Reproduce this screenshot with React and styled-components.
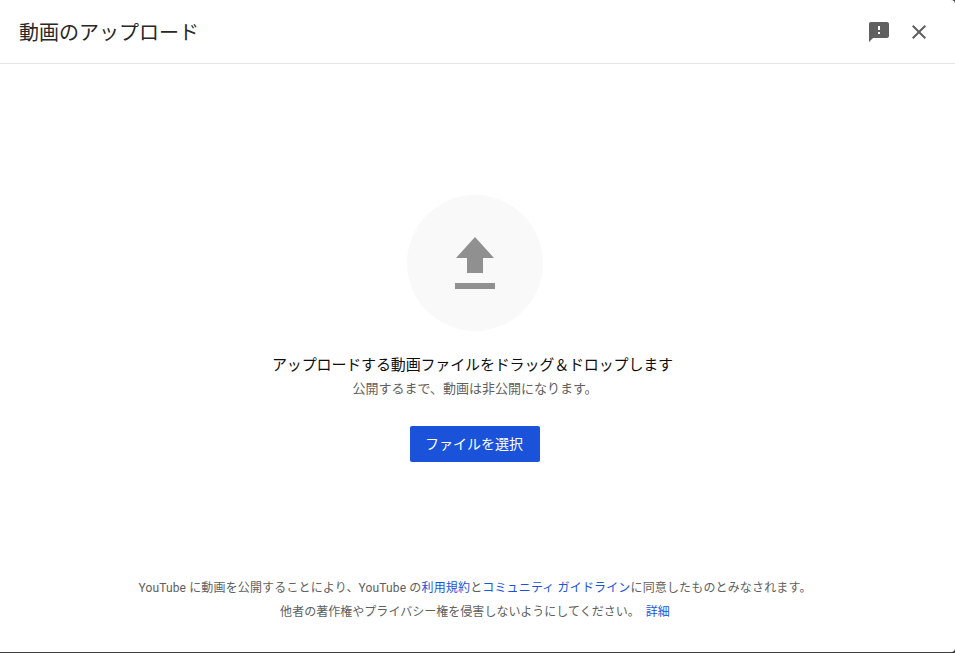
import React from 'react';
import styled, {createGlobalStyle} from 'styled-components';

const Global = createGlobalStyle`
    html, body {
        margin: 0;
        padding: 0;
        height: 100%;
        background: #3c3c3c;
    }
    body {
        font-family: Roboto, "Noto Sans CJK JP", "Noto Sans", sans-serif;
    }
`;

const Dialog = styled.div`
    width: 955px;
    height: 652px;
    display: flex;
    flex-direction: column;
    background: #fff;
    border-radius: 0 4px 4px 0;
    overflow: hidden;
`;

const Header = styled.header`
    height: 63px;
    flex: none;
    display: flex;
    align-items: center;
    gap: 16px;
    padding: 0 24px 0 19px;
    border-bottom: 1px solid #e5e5e5;
`;

const Title = styled.h1`
    flex: 1;
    margin: 0;
    font-size: 20px;
    font-weight: 400;
    color: #282828;
`;

const IconButton = styled.button`
    width: 24px;
    height: 24px;
    padding: 0;
    border: 0;
    background: none;
    color: #606060;
    cursor: pointer;
    svg {
        display: block;
        fill: currentColor;
    }
`;

const Main = styled.main`
    flex: 1;
    display: flex;
    flex-direction: column;
    align-items: center;
    padding: 131px 5px 0 0;
`;

const Circle = styled.div`
    width: 136px;
    height: 136px;
    display: flex;
    align-items: center;
    justify-content: center;
    border-radius: 50%;
    background: #f9f9f9;
    color: #909090;
`;

const Heading = styled.div`
    margin-top: 23px;
    padding-right: 5px;
    font-size: 15px;
    line-height: 22px;
    letter-spacing: -0.15px;
    color: #0d0d0d;
`;

const Sub = styled.div`
    margin-top: 1px;
    font-size: 13px;
    line-height: 24px;
    color: #606060;
`;

const SelectButton = styled.button`
    width: 130px;
    height: 36px;
    margin-top: 25px;
    padding: 0 2px 2px 0;
    border: 0;
    border-radius: 2px;
    background: #1a52d9;
    color: #fff;
    font: inherit;
    font-size: 14px;
    cursor: pointer;
`;

const Footer = styled.footer`
    flex: none;
    padding: 0 5px 28px 0;
    text-align: center;
    font-size: 12px;
    line-height: 24px;
    color: #606060;
`;

const FooterLine = styled.div`
    letter-spacing: ${p => p.$spacing}px;
`;

const FooterLink = styled.a`
    color: #1a52d9;
    text-decoration: none;
    margin-left: ${p => p.$gap || 0}px;
`;

export default function App() {
    return (
        <>
            <Global />
            <Dialog>
                <Header>
                    <Title>動画のアップロード</Title>
                    <IconButton aria-label="フィードバック">
                        <svg width="24" height="24" viewBox="0 0 24 24">
                            <path d="M20 2H4c-1.1 0-1.99.9-1.99 2L2 22l4-4h14c1.1 0 2-.9 2-2V4c0-1.1-.9-2-2-2zm-7 12h-2v-2h2v2zm0-4h-2V6h2v4z" />
                        </svg>
                    </IconButton>
                    <IconButton aria-label="閉じる">
                        <svg width="24" height="24" viewBox="0 0 24 24">
                            <path d="M19 6.41L17.59 5 12 10.59 6.41 5 5 6.41 10.59 12 5 17.59 6.41 19 12 13.41 17.59 19 19 17.59 13.41 12z" />
                        </svg>
                    </IconButton>
                </Header>
                <Main>
                    <Circle>
                        <svg width="40" height="52" viewBox="0 0 40 52" fill="currentColor">
                            <path d="M20 0L39 21H28V36H12V21H1zM0 46h40v6H0z" />
                        </svg>
                    </Circle>
                    <Heading>アップロードする動画ファイルをドラッグ＆ドロップします</Heading>
                    <Sub>公開するまで、動画は非公開になります。</Sub>
                    <SelectButton>ファイルを選択</SelectButton>
                </Main>
                <Footer>
                    <FooterLine $spacing={0.15}>
                        YouTube に動画を公開することにより、YouTube の
                        <FooterLink href="#">利用規約</FooterLink>と
                        <FooterLink href="#">コミュニティ ガイドライン</FooterLink>に同意したものとみなされます。
                    </FooterLine>
                    <FooterLine $spacing={0.03}>
                        他者の著作権やプライバシー権を侵害しないようにしてください。
                        <FooterLink href="#" $gap={6}>詳細</FooterLink>
                    </FooterLine>
                </Footer>
            </Dialog>
        </>
    );
}
